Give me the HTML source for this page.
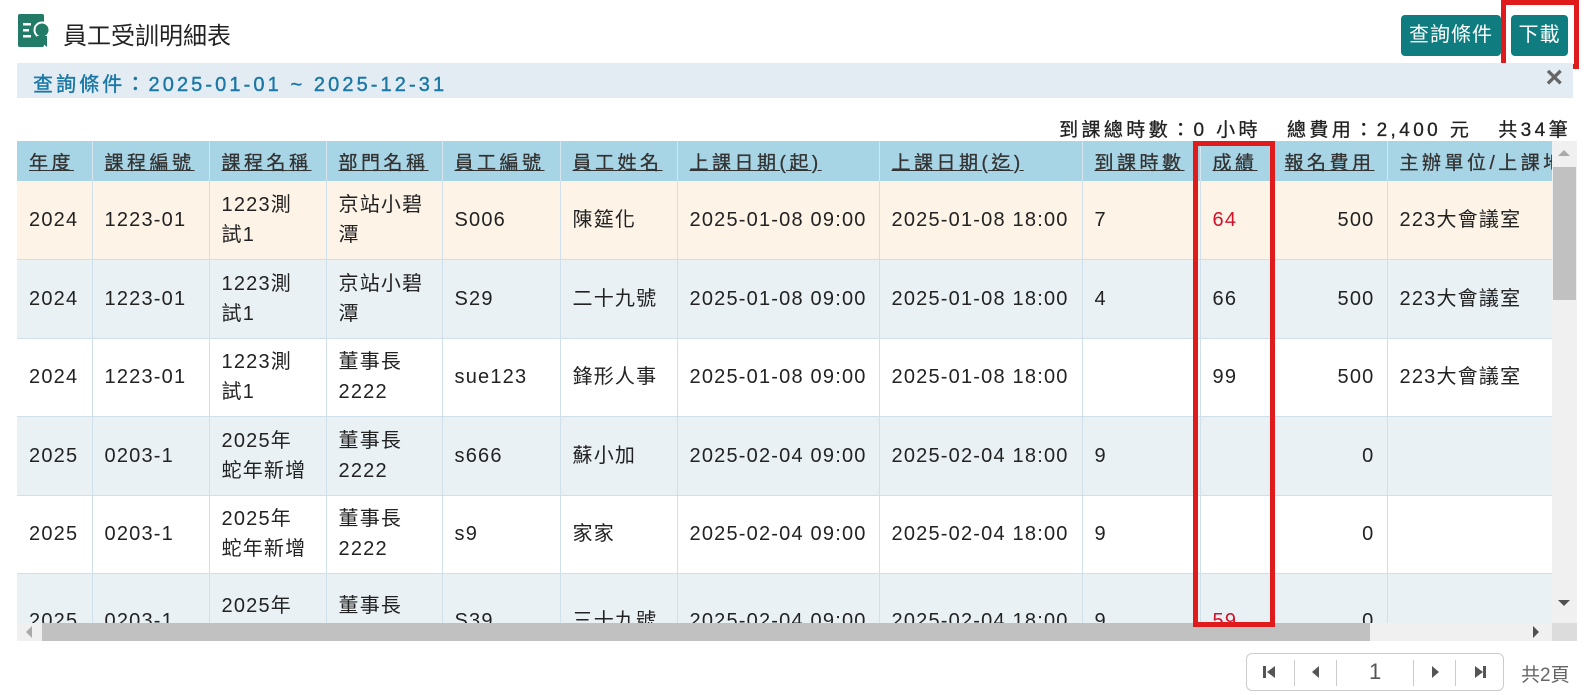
<!DOCTYPE html>
<html><head><meta charset="utf-8"><style>
*{box-sizing:border-box;margin:0;padding:0}
body{width:1585px;height:695px;background:#fff;font-family:"Liberation Sans","Noto Sans CJK TC",sans-serif;color:#222;position:relative;overflow:hidden}
.abs{position:absolute}
.title{left:63px;top:16px;font-size:24px;color:#222}
.btn{background:#0f7d80;color:#fff;font-size:20px;border-radius:4px;text-align:center;line-height:41px;height:41px;top:15px;letter-spacing:1px}
.qbar{left:17px;top:63px;width:1556px;height:35px;background:#e3ecf3}
.qtxt{left:16px;top:5px;font-size:20px;color:#1a78a6;letter-spacing:3.1px;-webkit-text-stroke:0.4px #1a78a6}
.sum{right:14px;top:115px;font-size:19px;letter-spacing:3.4px;color:#222;-webkit-text-stroke:0.3px #222}
.tbl{left:17px;top:141px;width:1535px;height:482px;overflow:hidden}
table{border-collapse:collapse;table-layout:fixed;width:1620px;font-size:20px;letter-spacing:1.2px}
th{background:#a8d5e6;height:40px;font-weight:normal;color:#333;text-align:left;padding:0 12px;border-right:1px solid #d6e6ee;white-space:nowrap;letter-spacing:3.5px;font-size:19px;-webkit-text-stroke:0.3px #333}
th span{text-decoration:underline}
td{height:78.5px;padding:0 12px;border-right:1px solid #cfe0ea;border-bottom:1px solid #cfe0ea;line-height:30px;vertical-align:middle;white-space:nowrap}
tr.a td{background:#fdf3e6}
tr.b td{background:#e9f1f5}
tr.c td{background:#fff}
tr.t td{height:94px}
.r{text-align:right}.red{color:#d0132a}
</style></head><body>
<svg class="abs" style="left:18px;top:14px" width="33" height="34" viewBox="0 0 33 34"><rect x="0" y="0" width="26" height="33" rx="2" fill="#227b67"/><rect x="5" y="9" width="8" height="2.5" fill="#fff"/><rect x="5" y="15" width="6" height="2.5" fill="#fff"/><rect x="5" y="21" width="8" height="2.5" fill="#fff"/><circle cx="24" cy="16" r="8.5" fill="#fff"/><circle cx="24" cy="16" r="6.5" fill="#227b67"/><path d="M19 22v11l5-4 5 4V22z" fill="#227b67"/></svg>
<div class="abs title">員工受訓明細表</div>
<div class="abs btn" style="left:1401px;width:100px">查詢條件</div>
<div class="abs btn" style="left:1511px;width:57px">下載</div>
<div class="abs" style="left:1501px;top:0;width:78px;height:69px;border:5px solid #e01b1b"></div>
<div class="abs qbar"><div class="abs qtxt">查詢條件：2025-01-01 ~ 2025-12-31</div>
<div class="abs" style="right:10px;top:-2px;font-size:30px;color:#666;font-weight:bold">×</div></div>
<div class="abs sum">到課總時數：0 小時&nbsp;&nbsp;&nbsp;總費用：2,400 元&nbsp;&nbsp;&nbsp;共34筆</div>
<div class="abs tbl"><table>
<colgroup><col width="75"><col width="117"><col width="117"><col width="116"><col width="118"><col width="117"><col width="202"><col width="203"><col width="118"><col width="72"><col width="115"><col width="250"></colgroup>
<tr><th><span>年度</span></th><th><span>課程編號</span></th><th><span>課程名稱</span></th><th><span>部門名稱</span></th><th><span>員工編號</span></th><th><span>員工姓名</span></th><th><span>上課日期(起)</span></th><th><span>上課日期(迄)</span></th><th><span>到課時數</span></th><th><span>成績</span></th><th><span>報名費用</span></th><th>主辦單位/上課地點</th></tr>
<tr class="a"><td>2024</td><td>1223-01</td><td>1223測<br>試1</td><td>京站小碧<br>潭</td><td>S006</td><td>陳筵化</td><td>2025-01-08 09:00</td><td>2025-01-08 18:00</td><td>7</td><td class="red">64</td><td class="r">500</td><td>223大會議室</td></tr>
<tr class="b"><td>2024</td><td>1223-01</td><td>1223測<br>試1</td><td>京站小碧<br>潭</td><td>S29</td><td>二十九號</td><td>2025-01-08 09:00</td><td>2025-01-08 18:00</td><td>4</td><td>66</td><td class="r">500</td><td>223大會議室</td></tr>
<tr class="c"><td>2024</td><td>1223-01</td><td>1223測<br>試1</td><td>董事長<br>2222</td><td>sue123</td><td>鋒形人事</td><td>2025-01-08 09:00</td><td>2025-01-08 18:00</td><td></td><td>99</td><td class="r">500</td><td>223大會議室</td></tr>
<tr class="b"><td>2025</td><td>0203-1</td><td>2025年<br>蛇年新增</td><td>董事長<br>2222</td><td>s666</td><td>蘇小加</td><td>2025-02-04 09:00</td><td>2025-02-04 18:00</td><td>9</td><td></td><td class="r">0</td><td></td></tr>
<tr class="c"><td>2025</td><td>0203-1</td><td>2025年<br>蛇年新增</td><td>董事長<br>2222</td><td>s9</td><td>家家</td><td>2025-02-04 09:00</td><td>2025-02-04 18:00</td><td>9</td><td></td><td class="r">0</td><td></td></tr>
<tr class="b t"><td>2025</td><td>0203-1</td><td>2025年<br>蛇年新增</td><td>董事長<br>2222</td><td>S39</td><td>三十九號</td><td>2025-02-04 09:00</td><td>2025-02-04 18:00</td><td>9</td><td class="red">59</td><td class="r">0</td><td></td></tr>
</table></div>
<div class="abs" style="left:1552px;top:141px;width:25px;height:482px;background:#f0f0f0"></div>
<div class="abs" style="left:1553px;top:167px;width:23px;height:133px;background:#c1c1c1"></div>
<div class="abs" style="left:1558px;top:150px;border:6px solid transparent;border-bottom:6px solid #aaa;border-top:0"></div>
<div class="abs" style="left:1558px;top:600px;border:6px solid transparent;border-top:6px solid #505050;border-bottom:0"></div>
<div class="abs" style="left:17px;top:623px;width:1535px;height:18px;background:#f0f0f0"></div>
<div class="abs" style="left:42px;top:623px;width:1328px;height:18px;background:#c1c1c1"></div>
<div class="abs" style="left:26px;top:626px;border:6px solid transparent;border-right:6px solid #aaa;border-left:0"></div>
<div class="abs" style="left:1533px;top:626px;border:6px solid transparent;border-left:6px solid #505050;border-right:0"></div>
<div class="abs" style="left:1552px;top:623px;width:25px;height:18px;background:#dcdcdc"></div>
<div class="abs" style="left:1193px;top:141px;width:82px;height:486px;border:5px solid #e01b1b"></div>
<div class="abs" style="left:1246px;top:653px;width:258px;height:38px;border:1px solid #ccc;border-radius:6px"></div>
<div class="abs" style="left:1294px;top:660px;width:1px;height:26px;background:#ccc"></div>
<div class="abs" style="left:1336px;top:660px;width:1px;height:26px;background:#ccc"></div>
<div class="abs" style="left:1413px;top:660px;width:1px;height:26px;background:#ccc"></div>
<div class="abs" style="left:1455px;top:660px;width:1px;height:26px;background:#ccc"></div>
<svg class="abs" style="left:1262px;top:664px" width="16" height="16"><rect x="1" y="2" width="3" height="12" fill="#555"/><path d="M13 2v12L5 8z" fill="#555"/></svg>
<svg class="abs" style="left:1308px;top:664px" width="16" height="16"><path d="M11 2v12L4 8z" fill="#555"/></svg>
<div class="abs" style="left:1369px;top:659px;font-size:22px;color:#555">1</div>
<svg class="abs" style="left:1427px;top:664px" width="16" height="16"><path d="M5 2v12l7-6z" fill="#555"/></svg>
<svg class="abs" style="left:1472px;top:664px" width="16" height="16"><path d="M3 2v12l8-6z" fill="#555"/><rect x="11" y="2" width="3" height="12" fill="#555"/></svg>
<div class="abs" style="left:1521px;top:660px;font-size:19px;color:#666">共2頁</div>
</body></html>
